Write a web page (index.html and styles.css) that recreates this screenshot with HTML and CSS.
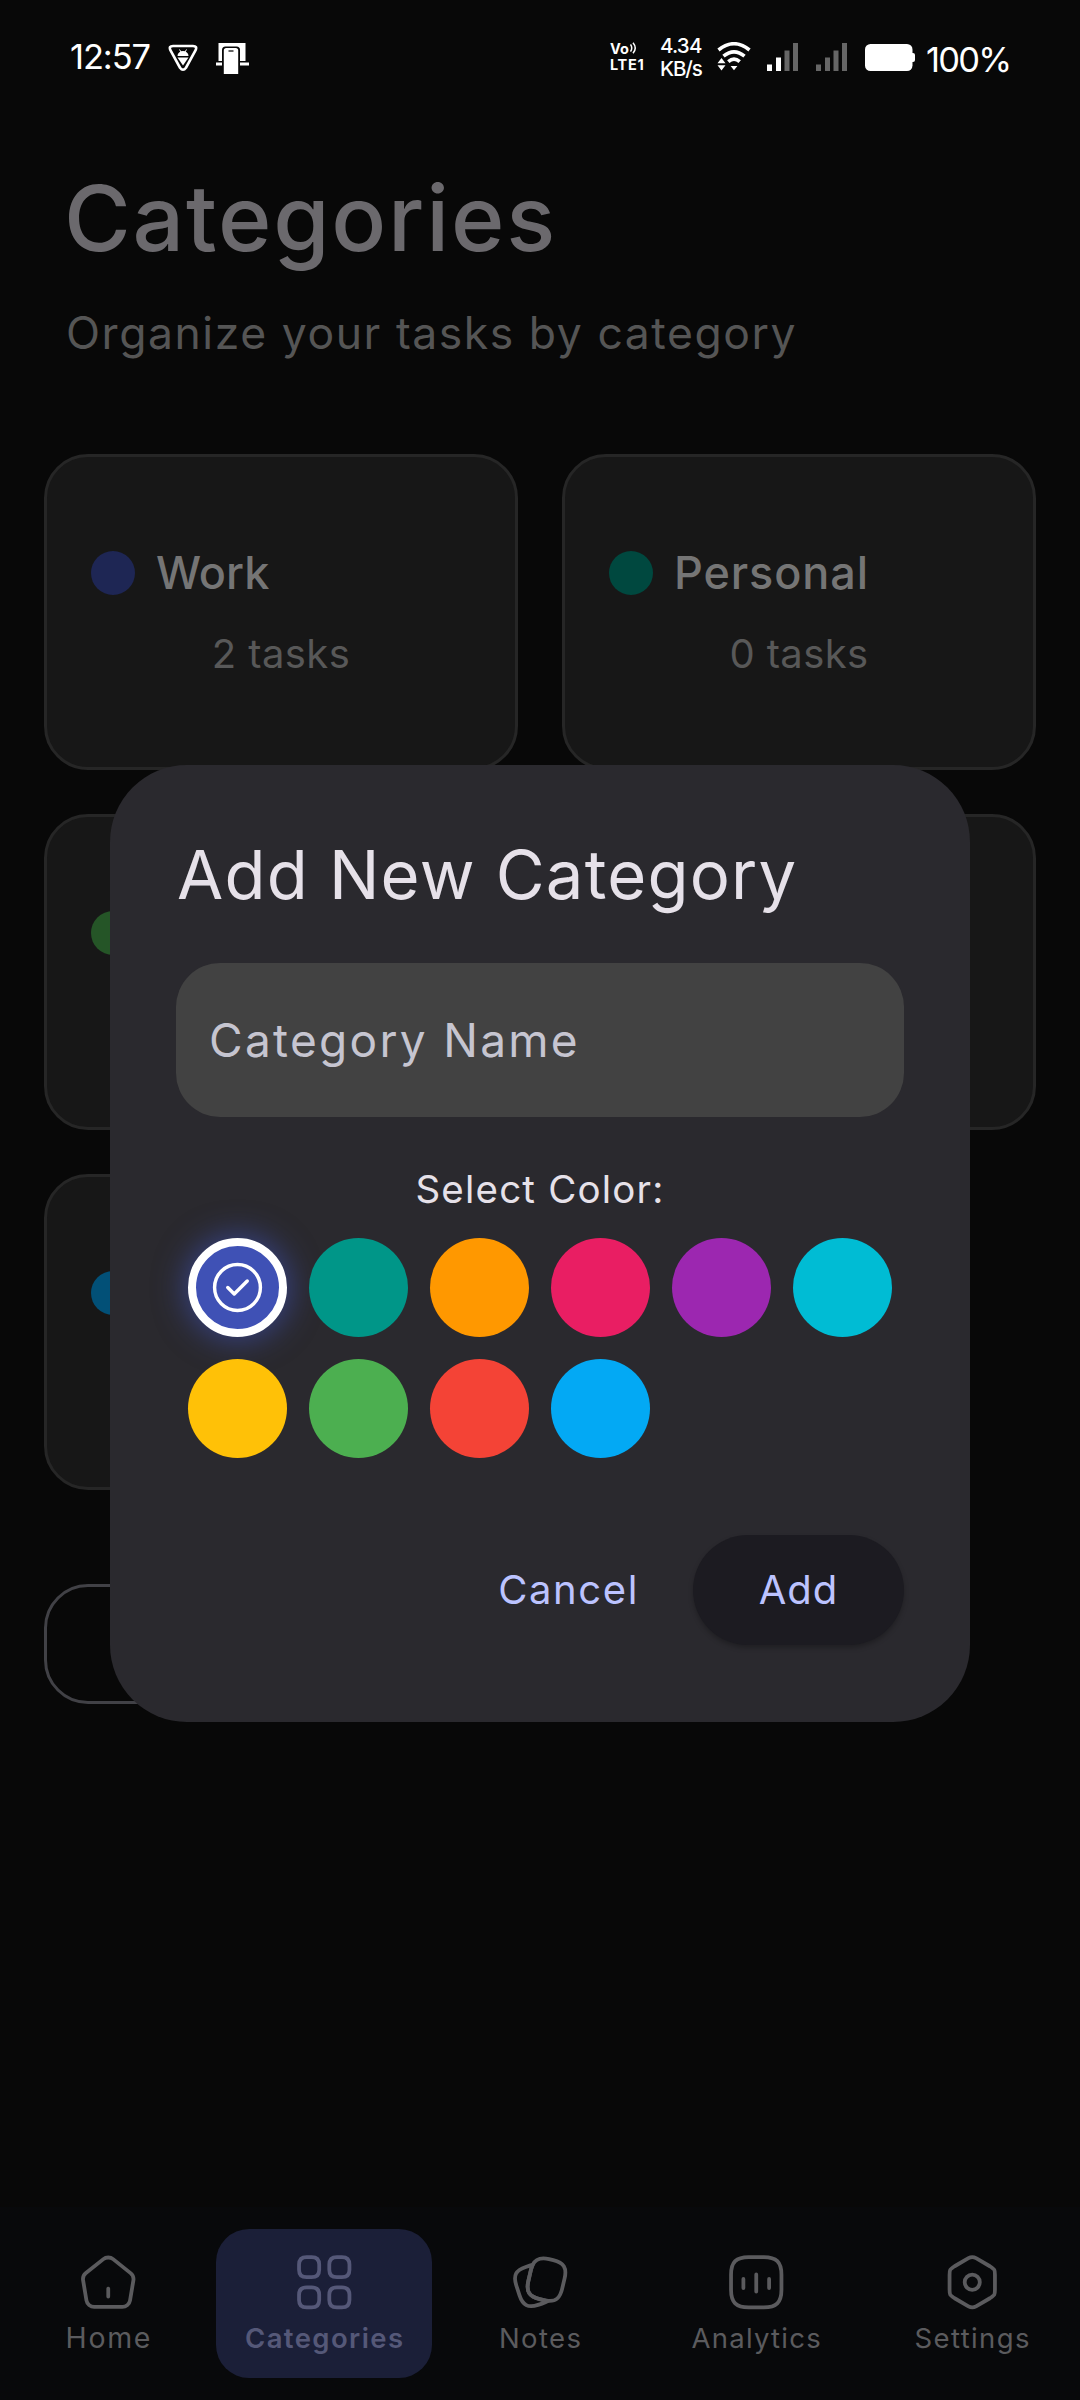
FILE: index.html
```html
<!DOCTYPE html>
<html lang="en">
<head>
<meta charset="utf-8">
<title>Categories</title>
<link rel="stylesheet" href="styles.css">
</head>
<body>
<div class="screen">
  <div class="status">
    <span class="clock">12:57</span>
    <svg class="shield" width="30" height="28" viewBox="0 0 30 28" fill="none">
      <path d="M5 2h20q4.500 0 2.600 4.200L18 23.700q-3 4-6 0L2.400 6.200Q.500 2 5 2z" stroke="#fff" stroke-width="2.600"/>
      <path d="M9.500 12a5.500 5 0 0 1 11 0zM9.500 13.600h11L15 21.500z" fill="#fff"/>
      <path d="M11.500 5.500l1.500 2.500M18.500 5.500L17 8" stroke="#fff"/>
    </svg>
    <svg class="cast" width="33" height="31" viewBox="0 0 33 31">
      <path d="M2.500 0h27v18h-27zM0 19.500h33v3H0z" fill="#fff"/>
      <path d="M6 31V7q0-3.500 3.500-3.500h11Q24 3.500 24 7v24z" fill="#080808"/>
      <path d="M7.800 31V7.500Q7.800 5 10.300 5h9.400q2.500 0 2.500 2.500V31z" fill="#fff"/>
      <path d="M12.500 8h5" stroke="#222" stroke-width="1.400"/>
    </svg>
    <div class="volte">
      <div class="vo"><span>Vo</span><svg width="7" height="12" viewBox="0 0 7 12" fill="none" stroke="#fff" stroke-width="1.500"><path d="M.500 2.500q2.500 3.500 0 7M3 .700q4.500 5.300 0 10.600"/></svg></div>
      <div class="lte">LTE1</div>
    </div>
    <div class="speed"><div class="rate">4.34</div><div class="unit">KB/s</div></div>
    <svg class="wifi" width="34" height="29" viewBox="0 0 34 29" fill="none">
      <path d="M1.500 8Q17-4.500 32.500 8M6.500 14.200Q17 5.500 27.500 14.200M11.300 19.600Q17 14.500 22.700 19.600" stroke="#fff" stroke-width="3.600"/>
      <path d="M13.600 24h6.800L17 28.300zM.500 21.200L4.500 16l4 5.200zM.500 23.200h8l-4 5.200z" fill="#fff"/>
    </svg>
    <svg class="signal one" width="31" height="28" viewBox="0 0 31 28" fill="#666"><path d="M0 21.500h5V28H0zM9 14.500h5V28H9z" fill="#fff"/><path d="M17.500 7.500h5V28h-5zM26 0h5v28h-5z"/></svg>
    <svg class="signal two" width="31" height="28" viewBox="0 0 31 28" fill="#666"><path d="M0 21.500h5V28H0zM9 14.500h5V28H9zM17.500 7.500h5V28h-5zM26 0h5v28h-5z"/></svg>
    <svg class="battery" width="50" height="27" viewBox="0 0 50 27" fill="#fff"><rect width="47.500" height="27" rx="5.500"/><rect x="42" y="9" width="8" height="9" rx="2"/></svg>
    <span class="percent">100%</span>
  </div>

  <header class="header">
    <h1 class="title">Categories</h1>
    <p class="subtitle">Organize your tasks by category</p>
  </header>

  <main class="cards">
    <section class="card">
      <div class="row"><i class="dot indigo"></i><span class="name work">Work</span></div>
      <div class="count">2 tasks</div>
    </section>
    <section class="card">
      <div class="row"><i class="dot teal"></i><span class="name">Personal</span></div>
      <div class="count">0 tasks</div>
    </section>
    <section class="card"><div class="row"><i class="dot green"></i></div><div class="count"></div></section>
    <section class="card"><div class="row"></div><div class="count"></div></section>
    <section class="card"><div class="row"><i class="dot blue"></i></div><div class="count"></div></section>
  </main>
  <div class="outline-button"></div>

  <nav class="nav">
    <div class="tab">
      <svg class="icon" viewBox="0 0 24 24"><path d="M12 17.700v-3.200M10.070 2.820L3.140 8.370c-.780.620-1.280 1.930-1.110 2.910l1.330 7.960c.240 1.420 1.600 2.570 3.040 2.570h11.200c1.430 0 2.800-1.160 3.040-2.570l1.330-7.960c.160-.980-.340-2.290-1.110-2.910l-6.930-5.540c-1.070-.860-2.800-.860-3.860-.010z"/></svg>
      <span class="label home">Home</span>
    </div>
    <div class="tab active">
      <svg class="icon" viewBox="0 0 24 24"><path d="M5 10h2c2 0 3-1 3-3V5c0-2-1-3-3-3H5C3 2 2 3 2 5v2c0 2 1 3 3 3zM17 10h2c2 0 3-1 3-3V5c0-2-1-3-3-3h-2c-2 0-3 1-3 3v2c0 2 1 3 3 3zM17 22h2c2 0 3-1 3-3v-2c0-2-1-3-3-3h-2c-2 0-3 1-3 3v2c0 2 1 3 3 3zM5 22h2c2 0 3-1 3-3v-2c0-2-1-3-3-3H5c-2 0-3 1-3 3v2c0 2 1 3 3 3z"/></svg>
      <span class="label">Categories</span>
    </div>
    <div class="tab">
      <svg class="icon" viewBox="0 0 24 24"><path d="M21.660 10.440l-.980 4.180c-.840 3.610-2.500 5.070-5.620 4.770-.500-.040-1.040-.130-1.620-.270l-1.680-.400c-4.170-.990-5.460-3.050-4.480-7.230l.980-4.190c.200-.850.440-1.590.740-2.200 1.170-2.420 3.160-3.070 6.500-2.280l1.670.390c4.190.980 5.470 3.050 4.490 7.230z"/><path d="M15.060 19.390c-.620.420-1.400.770-2.350 1.080l-1.580.520c-3.970 1.280-6.060.210-7.350-3.760L2.500 13.280c-1.280-3.970-.220-6.070 3.750-7.350l1.580-.520c.410-.130.800-.240 1.170-.310-.300.610-.540 1.350-.740 2.200l-.980 4.190c-.980 4.180.310 6.240 4.480 7.230l1.680.400c.580.140 1.120.230 1.620.270z"/></svg>
      <span class="label">Notes</span>
    </div>
    <div class="tab">
      <svg class="icon" viewBox="0 0 24 24"><path d="M9 22h6c5 0 7-2 7-7V9c0-5-2-7-7-7H9C4 2 2 4 2 9v6c0 5 2 7 7 7zM6.900 10.700v3.600M12 8.900v6.800M17.100 10.700v3.600"/></svg>
      <span class="label analytics">Analytics</span>
    </div>
    <div class="tab">
      <svg class="icon" viewBox="0 0 24 24"><path d="M3 9.110v5.770C3 17 3 17 5 18.350l5.500 3.180c.830.480 2.180.480 3 0l5.500-3.180c2-1.350 2-1.350 2-3.460V9.110C21 7 21 7 19 5.650l-5.500-3.180c-.820-.480-2.170-.480-3 0L5 5.650C3 7 3 7 3 9.110z"/><circle cx="12" cy="12" r="3"/></svg>
      <span class="label">Settings</span>
    </div>
  </nav>

  <div class="dialog">
    <h2 class="dialog-title">Add New Category</h2>
    <div class="field">Category Name</div>
    <div class="select">Select Color:</div>
    <div class="swatches">
      <div class="swatch s-indigo selected"><svg width="55" height="55" viewBox="0 0 24 24" fill="none" stroke="#fff" stroke-width="1.500" stroke-linecap="round" stroke-linejoin="round"><circle cx="12" cy="12" r="10"/><path d="M7.750 12l2.830 2.830 5.670-5.660"/></svg></div>
      <div class="swatch s-teal"></div>
      <div class="swatch s-orange"></div>
      <div class="swatch s-pink"></div>
      <div class="swatch s-purple"></div>
      <div class="swatch s-cyan"></div>
      <div class="swatch s-amber"></div>
      <div class="swatch s-green"></div>
      <div class="swatch s-red"></div>
      <div class="swatch s-blue"></div>
    </div>
    <div class="actions">
      <span class="cancel">Cancel</span>
      <span class="add">Add</span>
    </div>
  </div>
</div>
</body>
</html>
```
FILE: styles.css
```css
* { box-sizing: border-box; }
body { margin: 0; background: #080808; font-family: Inter, "Noto Sans", sans-serif; }
h1, h2, p { margin: 0; font-weight: 400; }
svg { display: block; flex: none; }
.screen { position: relative; width: 1080px; height: 2400px; overflow: hidden; display: flex; flex-direction: column; background: #080808; }

.status { display: flex; align-items: flex-start; height: 112px; padding-left: 70px; color: #fff; white-space: nowrap; flex: none; }
.clock { width: 98px; margin-top: 34px; font-size: 34.5px; line-height: 46px; letter-spacing: -1.1px; }
.shield { margin-top: 44px; }
.cast { margin: 43px 0 0 18px; }
.volte { width: 50px; margin: 42px 0 0 361px; font-weight: 700; font-size: 14.5px; }
.vo { display: flex; height: 14px; line-height: 14px; gap: 1px; font-size: 14.5px; }
.lte { height: 16px; margin-top: 1px; line-height: 16px; letter-spacing: .7px; }
.speed { width: 58px; margin-top: 34px; font-size: 20.5px; font-weight: 500; line-height: 23px; }
.rate { letter-spacing: -.8px; }
.unit { letter-spacing: -1.1px; }
.wifi { margin-top: 42px; margin-left: -1px; }
.signal { margin-top: 43px; }
.one { margin-left: 16px; }
.two { margin-left: 18px; }
.battery { margin: 44px 0 0 18px; }
.percent { margin: 37px 0 0 11px; font-size: 34.5px; line-height: 46px; letter-spacing: -1.8px; }

.header { padding: 57px 0 0 64px; flex: none; }
.title { font-size: 91px; font-weight: 550; line-height: 100px; letter-spacing: 1.8px; color: #6b696d; margin-top: -1px; }
.subtitle { margin-top: 35px; padding-left: 2px; font-size: 44.5px; line-height: 60px; letter-spacing: 1.55px; color: #555; }

.cards { display: grid; grid-template-columns: 474px 474px; grid-auto-rows: 316px; gap: 44px; margin: 91px 44px 0; flex: none; }
.card { display: flex; flex-direction: column; justify-content: center; padding: 0 44px; border: 3px solid #262626; border-radius: 44px; background: #171717; }
.row { display: flex; align-items: center; gap: 22px; height: 66px; margin-top: -2px; line-height: 66px; }
.dot { width: 44px; height: 44px; border-radius: 50%; flex: none; }
.indigo { background: #1e2654; }
.teal { background: #00483f; }
.green { background: #255527; }
.blue { background: #025077; }
.name { margin-left: -1px; font-size: 45px; font-weight: 550; letter-spacing: .9px; color: #757575; }
.work { letter-spacing: 0; }
.count { height: 58px; margin-top: 19px; line-height: 58px; font-size: 40px; letter-spacing: .4px; text-align: center; color: #585858; }
.outline-button { width: 474px; height: 120px; margin: 94px 0 0 44px; border: 3px solid #414146; border-radius: 44px; flex: none; }

.nav { display: grid; grid-template-columns: repeat(5, 216px); height: 193px; margin-top: auto; padding-top: 22px; background: #08090b; flex: none; }
.tab { display: flex; flex-direction: column; align-items: center; height: 149px; padding-top: 23px; border-radius: 33px; color: #5b5b5e; }
.active { background: #1b1f38; color: #555878; }
.icon { width: 60.5px; height: 60.5px; fill: none; stroke: currentColor; stroke-width: 1.5; stroke-linecap: round; stroke-linejoin: round; }
.label { margin: 7px -1.4px 0 0; font-size: 27.5px; line-height: 36px; letter-spacing: 1.4px; }
.home { font-size: 28.5px; letter-spacing: 1.7px; margin-right: -1.7px; }
.analytics { letter-spacing: 1.25px; }
.active .label { font-weight: 600; }

.dialog { position: absolute; left: 110px; top: 765px; width: 860px; height: 957px; padding: 70px 66px 0; border-radius: 77px; background: #2a292e; color: #e6e1e9; }
.dialog-title { padding-left: 1px; font-size: 67px; line-height: 80px; letter-spacing: 1.2px; white-space: nowrap; }
.field { height: 154px; margin-top: 48px; padding-left: 33px; border-radius: 44px; background: #424242; font-size: 46px; line-height: 155px; letter-spacing: 2.3px; color: #c6c5d0; }
.select { margin-top: 43px; font-size: 38.5px; line-height: 58px; letter-spacing: 1.2px; text-align: center; }
.swatches { display: grid; grid-template-columns: repeat(6, 99px); grid-auto-rows: 99px; gap: 22px; margin: 20px 0 0 12px; }
.swatch { display: flex; align-items: center; justify-content: center; border-radius: 50%; }
.selected { border: 8px solid #fff; box-shadow: 0 0 30px 4px rgba(63, 81, 181, .6); }
.s-indigo { background: #3f51b5; }
.s-teal { background: #009688; }
.s-orange { background: #ff9800; }
.s-pink { background: #e91e63; }
.s-purple { background: #9c27b0; }
.s-cyan { background: #00bcd4; }
.s-amber { background: #ffc107; }
.s-green { background: #4caf50; }
.s-red { background: #f44336; }
.s-blue { background: #03a9f4; }
.actions { display: flex; justify-content: flex-end; margin-top: 77px; font-size: 40px; line-height: 110px; color: #bcc3ff; }
.cancel { margin-right: 54px; letter-spacing: 1.6px; }
.add { width: 211px; border-radius: 55px; background: #1c1b21; text-align: center; letter-spacing: .9px; box-shadow: 0 3px 5px rgba(0, 0, 0, .25); }
```
